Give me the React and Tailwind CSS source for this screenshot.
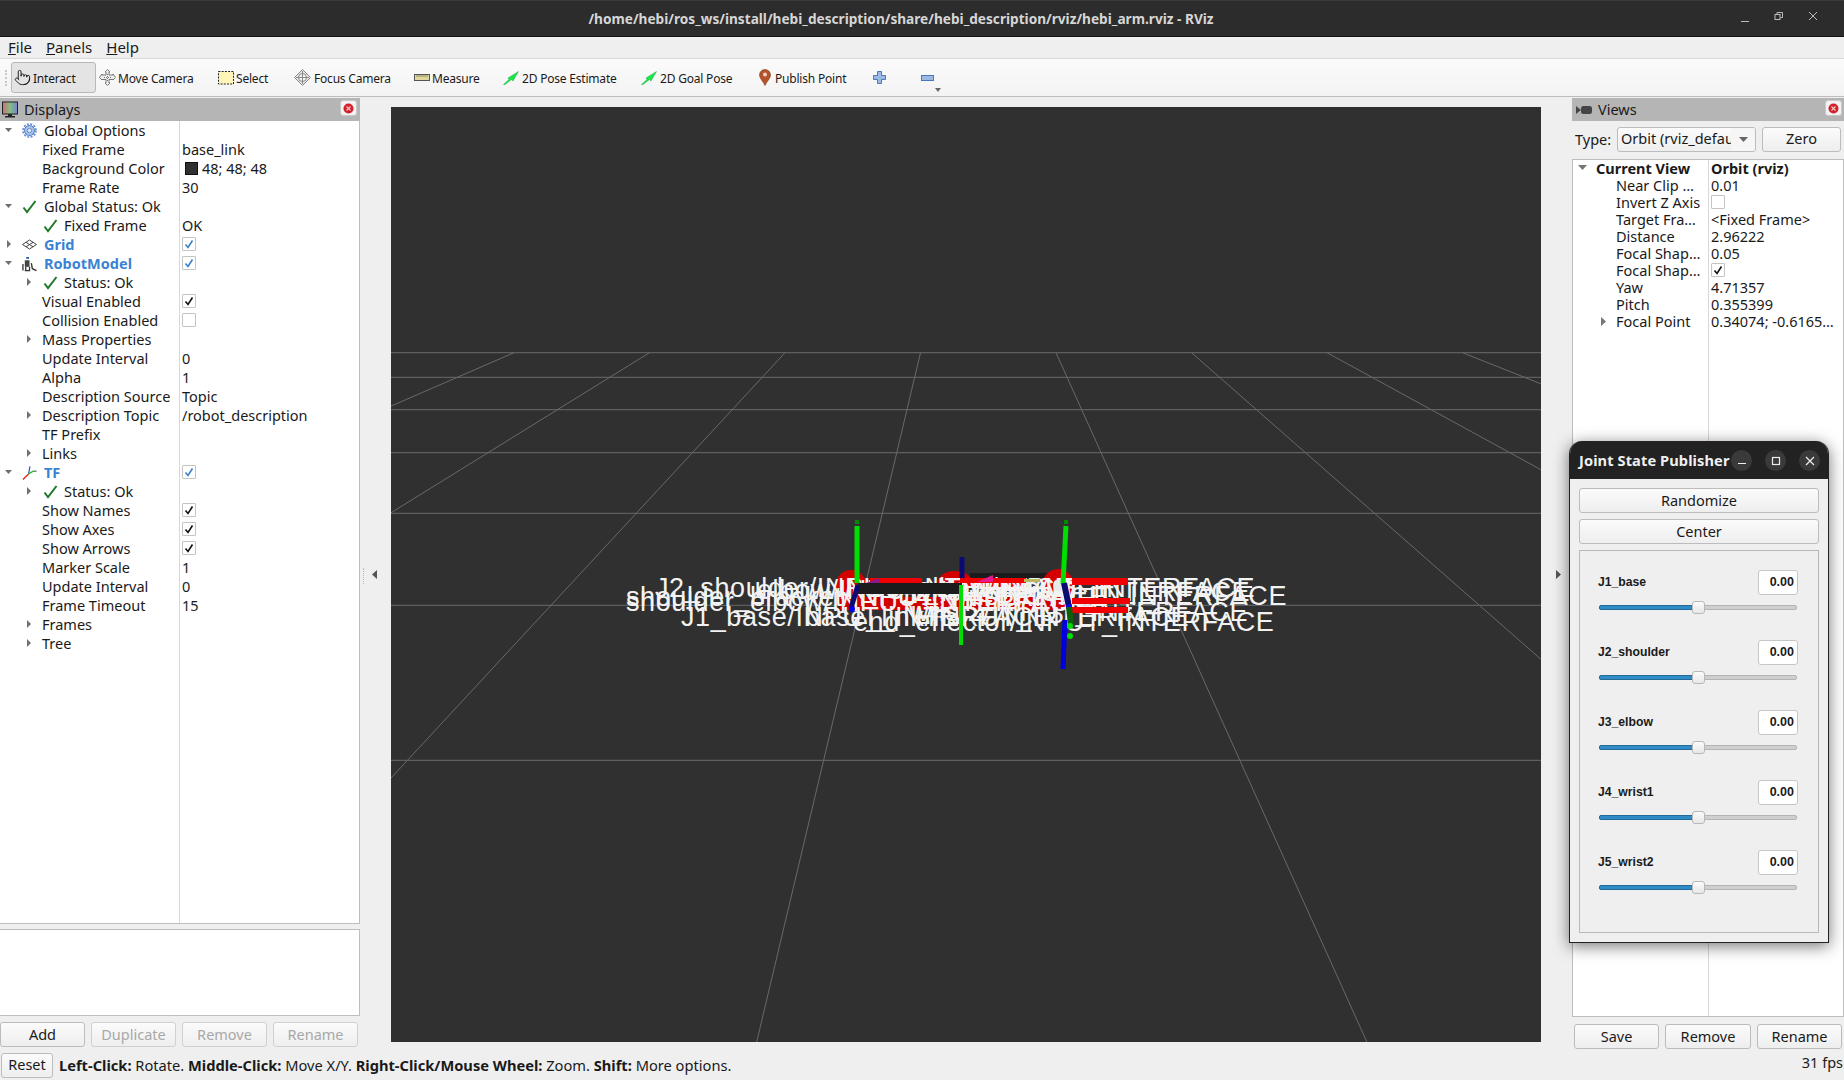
import React from "react";
import { Pointer } from "lucide-react";

const Tri = ({ dir, x }) => (
  <svg width="10" height="10" viewBox="0 0 10 10" className="absolute top-[4px]" style={{ left: x }}>
    {dir === "down" ? <polygon points="1,3 8,3 4.5,7" fill="#707070" /> : <polygon points="3,1 7,5 3,9" fill="#707070" />}
  </svg>
);

const Check = () => (
  <svg width="15" height="15" viewBox="0 0 15 15">
    <path d="M1.5 8.5 L5 13 L13.5 2" fill="none" stroke="#1f7a28" strokeWidth="2" />
  </svg>
);

const Box = ({ on, blue }) => (
  <span className="w-[14px] h-[14px] mt-[-1px] flex items-center justify-center bg-white border border-[#c4c4c4] rounded-[1px]">
    {on && (
      <svg width="10" height="10" viewBox="0 0 10 10">
        <path d="M1.5 5.5 L4 8.5 L8.5 1.5" fill="none" stroke={blue ? "#3a80c8" : "#111"} strokeWidth="1.6" />
      </svg>
    )}
  </span>
);

const Gear = () => (
  <svg width="15" height="15" viewBox="0 0 15 15">
    <circle cx="7.5" cy="7.5" r="5" fill="#a9c3ea" stroke="#4a78c0" strokeWidth="1" />
    <circle cx="7.5" cy="7.5" r="6.5" fill="none" stroke="#5f8ad0" strokeWidth="1.6" strokeDasharray="2 1.4" />
    <circle cx="7.5" cy="7.5" r="2.2" fill="#dfe9f8" stroke="#4a78c0" strokeWidth="0.8" />
  </svg>
);
const GridIcon = () => (
  <svg width="15" height="11" viewBox="0 0 15 11">
    <path d="M0.5 5.5 L7.5 1 L14.5 5.5 L7.5 10 Z M4 3.3 L11 7.8 M11 3.3 L4 7.8" fill="none" stroke="#444" strokeWidth="1" />
  </svg>
);
const RobotIcon = () => (
  <svg width="16" height="16" viewBox="0 0 16 16">
    <rect x="4.5" y="0.5" width="3" height="2" fill="#2a62b8" />
    <rect x="3" y="4" width="5" height="7" fill="#444" />
    <path d="M1 8 L1 15 M3 15 L8 15 L8 11 M4 11 L4 15 M10 7 L11 13 L15.5 15" fill="none" stroke="#333" strokeWidth="1.4" />
  </svg>
);
const TfIcon = () => (
  <svg width="16" height="16" viewBox="0 0 16 16">
    <path d="M7 9 L1 15" stroke="#e02020" strokeWidth="1.4" />
    <path d="M7 9 L8.5 1" stroke="#2050e0" strokeWidth="1.2" />
    <path d="M7 9 L12 6" stroke="#20c020" strokeWidth="1.4" />
    <path d="M12 6 L15.5 6" stroke="#333" strokeWidth="1" />
  </svg>
);
const Monitor = () => (
  <svg width="16" height="18" viewBox="0 0 16 18">
    <defs>
      <linearGradient id="scr" x1="0" x2="1" y1="0" y2="0">
        <stop offset="0" stopColor="#d66a7a" />
        <stop offset="0.5" stopColor="#7fc080" />
        <stop offset="1" stopColor="#7a80d0" />
      </linearGradient>
    </defs>
    <rect x="0.5" y="1" width="15" height="12" fill="url(#scr)" stroke="#222" />
    <rect x="6" y="13" width="4" height="2" fill="#222" />
    <rect x="3" y="15" width="10" height="1.5" fill="#222" />
  </svg>
);

const CloseBtn = () => (
  <span className="w-[17px] h-[16px] mt-[-3px] bg-[#f2f2f2] border border-[#c8c8c8] rounded-[3px] flex items-center justify-center">
    <svg width="11" height="11" viewBox="0 0 11 11">
      <circle cx="5.5" cy="5.5" r="5" fill="#d3202a" />
      <path d="M3.5 3.5 L7.5 7.5 M7.5 3.5 L3.5 7.5" stroke="#f4c4c4" strokeWidth="1.2" />
    </svg>
  </span>
);

const rows = [
  { l: 0, arrow: "down", icon: <Gear />, name: "Global Options" },
  { l: 1, name: "Fixed Frame", value: "base_link" },
  { l: 1, name: "Background Color", swatch: true, value: "48; 48; 48" },
  { l: 1, name: "Frame Rate", value: "30" },
  { l: 0, arrow: "down", icon: <Check />, name: "Global Status: Ok" },
  { l: 1, check: true, name: "Fixed Frame", value: "OK" },
  { l: 0, arrow: "right", icon: <GridIcon />, name: "Grid", blue: true, box: "blue" },
  { l: 0, arrow: "down", icon: <RobotIcon />, name: "RobotModel", blue: true, box: "blue" },
  { l: 1, arrow: "right", check: true, name: "Status: Ok" },
  { l: 1, name: "Visual Enabled", box: "on" },
  { l: 1, name: "Collision Enabled", box: "off" },
  { l: 1, arrow: "right", name: "Mass Properties" },
  { l: 1, name: "Update Interval", value: "0" },
  { l: 1, name: "Alpha", value: "1" },
  { l: 1, name: "Description Source", value: "Topic" },
  { l: 1, arrow: "right", name: "Description Topic", value: "/robot_description" },
  { l: 1, name: "TF Prefix" },
  { l: 1, arrow: "right", name: "Links" },
  { l: 0, arrow: "down", icon: <TfIcon />, name: "TF", blue: true, box: "blue" },
  { l: 1, arrow: "right", check: true, name: "Status: Ok" },
  { l: 1, name: "Show Names", box: "on" },
  { l: 1, name: "Show Axes", box: "on" },
  { l: 1, name: "Show Arrows", box: "on" },
  { l: 1, name: "Marker Scale", value: "1" },
  { l: 1, name: "Update Interval", value: "0" },
  { l: 1, name: "Frame Timeout", value: "15" },
  { l: 1, arrow: "right", name: "Frames" },
  { l: 1, arrow: "right", name: "Tree" },
];

const TreeRow = ({ r }) => (
  <div className="relative h-[19px] flex items-center leading-[19px]">
    {r.arrow && <Tri dir={r.arrow} x={r.l === 0 ? 4 : 24} />}
    <div className="w-[179px] shrink-0 flex items-center">
      {r.l === 0 && (
        <>
          <span className="w-[15px] h-[19px] ml-[22px] mr-[1px] flex items-center justify-center">{r.icon}</span>
          <span className={`ml-[6px] ${r.blue ? "font-bold text-[#3a83d2]" : ""}`}>{r.name}</span>
        </>
      )}
      {r.l === 1 && r.check && (
        <>
          <span className="w-[15px] h-[19px] ml-[43px] flex items-center justify-center"><Check /></span>
          <span className="ml-[6px]">{r.name}</span>
        </>
      )}
      {r.l === 1 && !r.check && <span className="ml-[42px] whitespace-nowrap">{r.name}</span>}
    </div>
    <div className="pl-[3px] flex items-center whitespace-nowrap">
      {r.swatch && <span className="w-[13px] h-[13px] ml-[3px] mr-[4px] bg-[#303030] border border-[#111]" />}
      {r.value}
      {r.box && <Box on={r.box !== "off"} blue={r.box === "blue"} />}
    </div>
  </div>
);

const Btn = ({ children, className = "", disabled }) => (
  <button
    className={`h-[25px] flex items-center justify-center rounded-[3px] border bg-gradient-to-b from-[#fbfbfb] to-[#eeeeee] ${
      disabled ? "border-[#d0d0d0] text-[#a8a8a8]" : "border-[#bcbcbc] text-[#1a1a1a]"
    } ${className}`}
  >
    {children}
  </button>
);

function Arrow() {
  return (
    <svg width="16" height="14" viewBox="0 0 16 14">
      <path d="M0.5 13.5 L6 8.5 L5 7 L15.5 0.5 L10 10 L8.5 8.5 L2 13.5 Z" fill="#18e84a" stroke="#0a9a2a" strokeWidth="0.4" />
    </svg>
  );
}

const tools = [
  { w: 85, g: 2, label: "Interact", active: true, icon: <Pointer size={17} strokeWidth={1.3} color="#111" /> },
  {
    w: 118,
    g: 2,
    label: "Move Camera",
    icon: (
      <svg width="17" height="17" viewBox="0 0 17 17" fill="none" stroke="#777" strokeWidth="1">
        <path d="M8.5 0.5 L11 3 L10 3 L10 6 L14 6 L14 5 L16.5 8.5 L14 11 L14 10.5 L10 10.5 L10 14 L11 14 L8.5 16.5 L6 14 L7 14 L7 10.5 L3 10.5 L3 11 L0.5 8.5 L3 5 L3 6 L7 6 L7 3 L6 3 Z" fill="#eee" />
        <path d="M5 8.5 H12 M8.5 5 V12" strokeDasharray="1 1" />
      </svg>
    ),
  },
  {
    w: 77,
    g: 2,
    label: "Select",
    icon: (
      <svg width="16" height="14" viewBox="0 0 16 14">
        <rect x="0.5" y="0.5" width="15" height="12.5" fill="#fdf6b8" stroke="#222" strokeDasharray="2 1.2" />
      </svg>
    ),
  },
  {
    w: 119,
    g: 3,
    label: "Focus Camera",
    icon: (
      <svg width="17" height="17" viewBox="0 0 17 17" fill="none" stroke="#888" strokeWidth="1">
        <path d="M8.5 0.5 L16.5 8.5 L8.5 16.5 L0.5 8.5 Z" fill="#e8e8e8" />
        <circle cx="8.5" cy="8.5" r="4" fill="#f4f4f4" />
        <path d="M8.5 2 V15 M2 8.5 H15" />
      </svg>
    ),
  },
  {
    w: 89,
    g: 2,
    label: "Measure",
    icon: (
      <svg width="16" height="7" viewBox="0 0 16 7">
        <rect x="0.5" y="0.5" width="15" height="6" fill="#e2d79a" stroke="#555" />
        <path d="M3 1 V3 M5 1 V3 M7 1 V3 M9 1 V3 M11 1 V3 M13 1 V3" stroke="#555" strokeWidth="0.6" />
      </svg>
    ),
  },
  { w: 138, g: 3, label: "2D Pose Estimate", icon: <Arrow /> },
  { w: 117, g: 3, label: "2D Goal Pose", icon: <Arrow /> },
  {
    w: 115,
    g: 1,
    label: "Publish Point",
    icon: (
      <svg width="12" height="17" viewBox="0 0 12 17" className="mr-[2px]">
        <path d="M6 16.5 C4 12 0.5 9.5 0.5 6 A5.5 5.5 0 0 1 11.5 6 C11.5 9.5 8 12 6 16.5 Z" fill="#b5532b" stroke="#7a3a20" strokeWidth="0.6" />
        <circle cx="6" cy="5.5" r="2" fill="#f0d0c0" />
      </svg>
    ),
  },
];

const PlusIcon = () => (
  <svg width="13" height="13" viewBox="0 0 13 13">
    <path d="M4.5 0.5 H8.5 V4.5 H12.5 V8.5 H8.5 V12.5 H4.5 V8.5 H0.5 V4.5 H4.5 Z" fill="#9db9e2" stroke="#4a78c0" />
  </svg>
);

const Toolbar = () => (
  <div className="relative h-[38px] bg-gradient-to-b from-[#fbfbfb] to-[#f3f3f3] border-b border-[#bdbdbd] flex items-center pl-[11px] text-[12px] text-[#1a1a1a] tracking-[-0.2px]">
    <span className="absolute left-[5px] top-[11px] h-[16px] w-[2px] border-l-2 border-dotted border-[#c8c8c8]" />
    {tools.map((t) => (
      <div
        key={t.label}
        className={`h-[31px] flex items-center shrink-0 ${t.active ? "bg-[#e4e4e4] border border-[#b8b8b8] rounded-[3px] pl-[2px]" : "pl-[3px]"}`}
        style={{ width: t.w }}
      >
        <span className="w-[17px] flex justify-center items-center shrink-0">{t.icon}</span>
        <span className="whitespace-nowrap pt-[2px]" style={{ marginLeft: t.g }}>{t.label}</span>
      </div>
    ))}
    <span className="ml-[4px] w-[48px] flex"><PlusIcon /></span>
    <span className="relative flex">
      <svg width="13" height="6" viewBox="0 0 13 6">
        <rect x="0.5" y="0.5" width="12" height="5" fill="#9db9e2" stroke="#4a78c0" />
      </svg>
      <svg width="6" height="4" viewBox="0 0 6 4" className="absolute left-[14px] top-[13px]">
        <polygon points="0,0 6,0 3,4" fill="#666" />
      </svg>
    </span>
  </div>
);

const xTop = (i) => 529.5 + 135.5 * i;
const xBot = (i) => 432.7 + 416 * i;
const lineAt = (i, y) => xTop(i) + ((xBot(i) - xTop(i)) * (y - 245.7)) / 407.3;

const hLines = [245.7, 270.3, 302.7, 345.7, 406.3, 498.3, 653.3];
const labels = [
  { t: "J2_shoulder/INPUT_INTERFACE", l: 264, c: 588 },
  { t: "shoulder_bracket/INPUT_INTERFACE", l: 235, c: 597 },
  { t: "shoulder_elbow/INPUT_INTERFACE", l: 235, c: 602 },
  { t: "elbow/INPUT_INTERFACE", l: 366, c: 590 },
  { t: "J3_elbow/INPUT_INTERFACE", r: 1255, c: 588 },
  { t: "wrist1/INPUT_INTERFACE", r: 1250, c: 592 },
  { t: "J4_wrist1/INPUT_INTERFACE", r: 1287, c: 596 },
  { t: "wrist2/INPUT_INTERFACE", r: 1248, c: 612 },
  { t: "J1_base/INPUT_INTERFACE", l: 290, c: 617 },
  { t: "base_link/INPUT_INTERFACE", l: 414, c: 617 },
  { t: "end_effector/INPUT_INTERFACE", l: 462, c: 622 },
];

const Viewport = () => (
  <div className="relative w-[1150px] h-[935px] mt-[10px] bg-[#303030] overflow-hidden shrink-0">
    <svg width="1150" height="935" viewBox="0 0 1150 935" className="absolute inset-0">
      {hLines.map((y) => (
        <line key={y} x1="0" x2="1150" y1={y} y2={y} stroke="#6b6b6b" strokeWidth="1" />
      ))}
      {[-3, -2, -1, 0, 1, 2, 3, 4].map((i) => (
        <line key={i} x1={lineAt(i, 245.7)} y1="245.7" x2={lineAt(i, 935)} y2="935" stroke="#696969" strokeWidth="1" />
      ))}
      <g transform="translate(-391 -107)">
        <rect x="970" y="573" width="80" height="8" fill="#1c1c1c" />
        <ellipse cx="851" cy="587" rx="16" ry="17" fill="#d40000" />
        <ellipse cx="955" cy="582" rx="17" ry="11" fill="#d40000" />
        <ellipse cx="1058" cy="589" rx="17" ry="20" fill="#d40000" />
        <rect x="840" y="597" width="220" height="13" fill="#d00000" />
        <rect x="960" y="583" width="66" height="5" fill="#e80000" />
      </g>
    </svg>
    {labels.map(({ t, l, r, c }, i) => (
      <span
        key={i}
        className="absolute whitespace-nowrap font-['Liberation_Sans',sans-serif] text-[27px] leading-[30px] tracking-[0.6px] text-[#f2f2f2]"
        style={l !== undefined ? { left: l, top: c - 122 } : { right: 1541 - r, top: c - 122 }}
      >
        {t}
      </span>
    ))}
    <svg width="1150" height="935" viewBox="0 0 1150 935" className="absolute inset-0">
      <g transform="translate(-391 -107)">
        <rect x="870" y="578" width="52" height="5" fill="#f00000" />
        <rect x="960" y="578" width="66" height="5" fill="#f00000" />
        <polygon points="977,582 993,575 993,582" fill="#e81890" />
        <polygon points="866,583 880,578 880,583" fill="#8a1a8a" />
        <rect x="1024" y="579" width="16" height="3" fill="#b8b860" />
        <rect x="1072" y="578" width="56" height="7" fill="#f00000" />
        <rect x="1072" y="598" width="58" height="6" fill="#f00000" />
        <rect x="1072" y="607" width="56" height="6" fill="#f00000" />
        <rect x="858" y="583" width="104" height="11" fill="#1c1c1c" />
        <circle cx="1059" cy="585" r="6" fill="#e8e8e8" />
      </g>
      <g transform="translate(-391 -107)" fill="none" strokeLinecap="butt">
        <path d="M857 526 V583" stroke="#00dd00" strokeWidth="5" />
        <path d="M855 522 H859" stroke="#008800" strokeWidth="4" />
        <path d="M858 585 L851 608" stroke="#0a0a70" strokeWidth="5" />
        <circle cx="852" cy="609" r="3" fill="#0000f0" />
        <path d="M962 557 V578" stroke="#0a0a70" strokeWidth="5" />
        <path d="M961 585 V645" stroke="#00dd00" strokeWidth="4" />
        <path d="M1066 526 L1063 584" stroke="#00dd00" strokeWidth="5" />
        <path d="M1064 522 H1068" stroke="#008800" strokeWidth="4" />
        <path d="M1064 583 L1069 607" stroke="#0a0a70" strokeWidth="6" />
        <circle cx="1069" cy="607" r="3" fill="#0000f0" />
        <path d="M1069 607 L1071 625" stroke="#0a600a" strokeWidth="6" />
        <path d="M1065 620 L1063 669" stroke="#0000e0" strokeWidth="5" />
        <circle cx="1070" cy="626" r="3" fill="#00dd00" />
        <circle cx="1070" cy="636" r="3" fill="#00dd00" />
      </g>
    </svg>
  </div>
);

const viewRows = [
  ["Near Clip …", "0.01"],
  ["Invert Z Axis", null, "off"],
  ["Target Fra…", "<Fixed Frame>"],
  ["Distance", "2.96222"],
  ["Focal Shap…", "0.05"],
  ["Focal Shap…", null, "on"],
  ["Yaw", "4.71357"],
  ["Pitch", "0.355399"],
  ["Focal Point", "0.34074; -0.6165…", null, true],
];

const Views = () => (
  <div className="w-[272px] shrink-0 flex flex-col h-[953px] pt-[1px] pb-[1px]">
    <div className="h-[23px] bg-[#b5b5b5] flex items-center pl-[4px] pr-[2px]">
      <svg width="17" height="10" viewBox="0 0 17 10">
        <polygon points="0,1 5,5 0,9" fill="#444" />
        <rect x="5" y="1" width="11" height="8" rx="2.5" fill="#444" />
      </svg>
      <span className="ml-[5px] flex-1">Views</span>
      <CloseBtn />
    </div>
    <div className="h-[38px] flex items-center pl-[3px] pb-[2px]">
      <span className="w-[42px] pt-[2px]">Type:</span>
      <div className="w-[139px] h-[25px] flex items-center pl-[3px] rounded-[3px] border border-[#bcbcbc] bg-gradient-to-b from-[#fbfbfb] to-[#eeeeee] overflow-hidden relative">
        <span className="whitespace-nowrap">Orbit (rviz_defau</span>
        <span className="absolute right-0 top-0 h-full w-[24px] bg-[#f6f6f6] flex items-center justify-center">
          <svg width="9" height="5" viewBox="0 0 9 5"><polygon points="0,0 9,0 4.5,5" fill="#666" /></svg>
        </span>
      </div>
      <Btn className="w-[79px] ml-[6px]">Zero</Btn>
    </div>
    <div className="flex-1 border border-[#bdbdbd] bg-white relative leading-[17px]">
      <span className="absolute left-[135px] top-0 bottom-0 w-px bg-[#d8d8d8]" />
      <div className="h-[17px] flex items-center font-bold relative">
        <svg width="9" height="5" viewBox="0 0 9 5" className="absolute left-[5px] top-[5px]"><polygon points="0,0 9,0 4.5,5" fill="#777" /></svg>
        <span className="ml-[23px] w-[115px]">Current View</span>
        <span>Orbit (rviz)</span>
      </div>
      {viewRows.map(([n, v, box, arrow], i) => (
        <div key={i} className="h-[17px] flex items-center relative">
          {arrow && <svg width="5" height="9" viewBox="0 0 5 9" className="absolute left-[28px] top-[4px]"><polygon points="0,0 5,4.5 0,9" fill="#777" /></svg>}
          <span className="ml-[43px] w-[95px] shrink-0 whitespace-nowrap">{n}</span>
          {v && <span className="whitespace-nowrap">{v}</span>}
          {box && <Box on={box === "on"} />}
        </div>
      ))}
    </div>
    <div className="h-[32px] flex items-end pl-[2px] gap-[6px]">
      <Btn className="w-[85px]">Save</Btn>
      <Btn className="w-[86px]">Remove</Btn>
      <Btn className="w-[85px]">Rename</Btn>
    </div>
  </div>
);

const joints = ["J1_base", "J2_shoulder", "J3_elbow", "J4_wrist1", "J5_wrist2"];

const JointWindow = () => (
  <div className="absolute left-[1569px] top-[441px] w-[260px] h-[502px] flex flex-col bg-[#efefef] border border-[#222] border-t-0 rounded-t-[13px] shadow-[0_3px_16px_rgba(0,0,0,0.55)] overflow-hidden">
    <div className="h-[38px] bg-[#222222] flex items-center pl-[9px] pt-[1px] shrink-0 relative">
      <span className="font-bold text-[#f0f0f0] whitespace-nowrap text-[14.6px] tracking-[0.1px]">Joint State Publisher</span>
      {[0, 1, 2].map((i) => (
        <span key={i} className={`absolute top-[9px] w-[21px] h-[21px] rounded-full bg-[#3a3a3a] flex items-center justify-center ${i === 0 ? "left-[161px]" : i === 1 ? "left-[195px]" : "left-[229px]"}`}>
          <svg width="10" height="10" viewBox="0 0 10 10" fill="none" stroke="#eee" strokeWidth="1.2">
            {i === 0 && <path d="M1 7.5 H9" />}
            {i === 1 && <rect x="1.5" y="1.5" width="7" height="7" />}
            {i === 2 && <path d="M1 1 L9 9 M9 1 L1 9" />}
          </svg>
        </span>
      ))}
    </div>
    <div className="px-[9px] pt-[9px] flex flex-col gap-[6px]">
      <Btn className="w-full">Randomize</Btn>
      <Btn className="w-full">Center</Btn>
    </div>
    <div className="mx-[9px] mt-[6px] h-[383px] border border-[#b8b8b8] pt-[19px] px-[18px] font-['Liberation_Sans',sans-serif] font-bold text-[12.2px]">
      {joints.map((j) => (
        <div key={j} className="h-[70px]">
          <div className="h-[25px] flex items-center justify-between pr-[2px]">
            <span>{j}</span>
            <span className="w-[40px] h-[25px] flex items-center justify-end pr-[3px] bg-white border border-[#c6c6c6] rounded-[3px] text-[12.5px]">0.00</span>
          </div>
          <div className="relative h-[5px] mt-[10px] ml-[1px] w-[198px] rounded-[2px] border border-[#b4b4b4] bg-[#cfcfcf]">
            <span className="absolute left-[-1px] top-[-1px] h-[5px] w-[94px] rounded-l-[2px] bg-[#308cc6] border border-[#246a96]" />
            <span className="absolute left-[92px] top-[-5px] w-[13px] h-[13px] rounded-[3px] bg-gradient-to-b from-[#fbfbfb] to-[#e8e8e8] border border-[#b8b8b8]" />
          </div>
        </div>
      ))}
    </div>
  </div>
);

export default function App() {
  return (
    <div className="relative w-[1844px] h-[1080px] overflow-hidden bg-[#efefef] text-[#1a1a1a] font-['Noto_Sans',sans-serif] text-[14.5px]">
      <div className="relative h-[37px] bg-[#2c2c2c] border-t border-[#3a3a3a] border-b border-b-[#111] flex items-center justify-center">
        <span className="font-bold text-[#d6d6d6] pr-[42px] pt-[1px] text-[13.65px]">/home/hebi/ros_ws/install/hebi_description/share/hebi_description/rviz/hebi_arm.rviz - RViz</span>
        <svg width="90" height="14" viewBox="0 0 90 14" className="absolute right-[13px] top-[10px]" fill="none" stroke="#bbb" strokeWidth="1">
          <path d="M0 10.5 H8" />
          <rect x="34" y="3.5" width="5" height="5" />
          <path d="M36 3 V1.5 H41.5 V6.5 H39.5" />
          <path d="M68 1 L76 9 M76 1 L68 9" />
        </svg>
      </div>
      <div className="h-[22px] bg-[#efefef] border-b border-[#d8d8d8] flex items-center pl-[8px] gap-[14px] text-[15px]">
        <span><span className="underline">F</span>ile</span>
        <span><span className="underline">P</span>anels</span>
        <span><span className="underline">H</span>elp</span>
      </div>
      <Toolbar />
      <div className="flex h-[953px]">
        <div className="w-[360px] shrink-0 flex flex-col pt-[1px]">
          <div className="h-[23px] bg-[#b5b5b5] flex items-center pl-[2px] pr-[3px]">
            <Monitor />
            <span className="ml-[6px] flex-1">Displays</span>
            <CloseBtn />
          </div>
          <div className="h-[803px] bg-white border-r border-b border-[#bdbdbd] relative">
            <span className="absolute left-[179px] top-0 bottom-0 w-px bg-[#d8d8d8]" />
            {rows.map((r, i) => <TreeRow key={i} r={r} />)}
          </div>
          <div className="h-[5px]" />
          <div className="h-[87px] bg-white border border-l-0 border-[#bdbdbd]" />
          <div className="flex mt-[6px] gap-[6px]">
            <Btn className="w-[85px]">Add</Btn>
            <Btn className="w-[85px]" disabled>Duplicate</Btn>
            <Btn className="w-[85px]" disabled>Remove</Btn>
            <Btn className="w-[85px]" disabled>Rename</Btn>
          </div>
        </div>
        <div className="w-[31px] shrink-0 relative">
          <span className="absolute left-[3px] top-[471px] h-[16px] border-l border-dotted border-[#bbb]" />
          <svg width="5" height="9" viewBox="0 0 5 9" className="absolute left-[12px] top-[473px]"><polygon points="5,0 0,4.5 5,9" fill="#555" /></svg>
        </div>
        <Viewport />
        <div className="w-[31px] shrink-0 relative">
          <svg width="5" height="9" viewBox="0 0 5 9" className="absolute left-[15px] top-[473px]"><polygon points="0,0 5,4.5 0,9" fill="#555" /></svg>
        </div>
        <Views />
      </div>
      <div className="h-[30px] flex items-center pl-[1px] pr-[1px]">
        <Btn className="w-[52px] h-[24px]">Reset</Btn>
        <span className="ml-[6px] pt-[1px] flex-1 whitespace-nowrap text-[14.65px]">
          <b>Left-Click:</b> Rotate. <b>Middle-Click:</b> Move X/Y. <b>Right-Click/Mouse Wheel:</b> Zoom. <b>Shift:</b> More options.
        </span>
        <span className="mb-[5px]">31 fps</span>
      </div>
      <JointWindow />
    </div>
  );
}
